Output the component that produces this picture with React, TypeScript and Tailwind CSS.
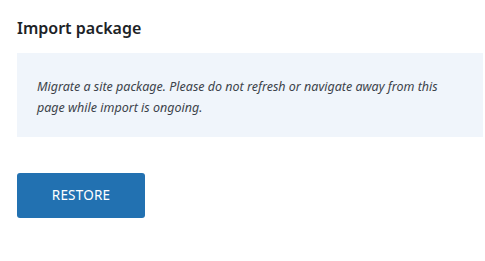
import React from "react";

export default function App() {
  return (
    <div className="w-[485px] h-[261px] bg-white pl-[17px] pr-[2px] pt-[18px] font-['Noto_Sans',sans-serif]">
      <h2 className="text-[16px] leading-[20px] font-semibold text-[#1d2327]">Import package</h2>
      <div className="mt-[15px] h-[84px] bg-[#f0f5fb] px-[20px] pt-[23px]">
        <p className="text-[12.5px] leading-[21px] italic text-[#3c434a]">
          Migrate a site package. Please do not refresh or navigate away from this page while import is ongoing.
        </p>
      </div>
      <button className="mt-[36px] w-[128px] h-[45px] rounded-[3px] bg-[#2271b1] text-white text-[13.5px] tracking-[0.2px]">
        RESTORE
      </button>
    </div>
  );
}
